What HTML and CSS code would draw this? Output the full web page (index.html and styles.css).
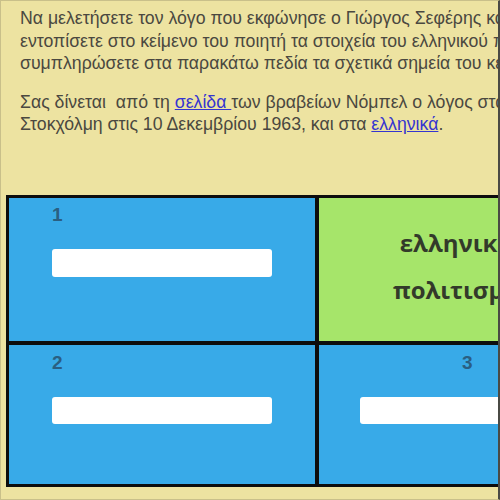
FILE: index.html
```html
<!DOCTYPE html>
<html lang="el">
<head>
<meta charset="utf-8">
<title>Σεφέρης</title>
<link rel="stylesheet" href="styles.css">
</head>
<body>
<div class="frame">
  <div class="intro">
    <p class="para para-first">Να μελετήσετε τον λόγο που εκφώνησε ο Γιώργος Σεφέρης κατά την τελετή απονομής του βραβείου Νόμπελ, να<br>εντοπίσετε στο κείμενο του ποιητή τα στοιχεία του ελληνικού πολιτισμού που αναφέρει και να<br>συμπληρώσετε στα παρακάτω πεδία τα σχετικά σημεία του κειμένου.</p>
    <p class="para">Σας δίνεται &nbsp;από τη <a href="#">σελίδα </a>των βραβείων Νόμπελ ο λόγος στα αγγλικά, όπως εκφωνήθηκε στη<br>Στοκχόλμη στις 10 Δεκεμβρίου 1963, και στα <a href="#">ελληνικά</a>.</p>
  </div>
  <div class="board">
    <div class="cell cell-blue row-a">
      <div class="num">1</div>
      <div class="field"></div>
    </div>
    <div class="cell cell-green row-a">
      <div class="title">ελληνικός<br>πολιτισμός</div>
    </div>
    <div class="cell cell-blue row-b">
      <div class="num">2</div>
      <div class="field"></div>
    </div>
    <div class="cell cell-blue row-b">
      <div class="num num-right">3</div>
      <div class="field field-right"></div>
    </div>
  </div>
</div>
</body>
</html>
```
FILE: styles.css
```css
html, body {
  margin: 0;
  padding: 0;
}
body {
  background: #ede3a1;
  overflow: hidden;
  font-family: "Liberation Sans", Arial, sans-serif;
}
.frame {
  width: 500px;
  height: 500px;
  box-sizing: border-box;
  border: 1px solid #c9c08a;
  border-right: 2px solid #4a4a44;
  overflow: hidden;
}
.intro {
  padding-left: 19px;
  padding-top: 6px;
  width: 1200px;
}
.para {
  margin: 0 0 16px 0;
  font-size: 17.7px;
  line-height: 22.5px;
  color: #4a4840;
  white-space: nowrap;
}
.para a {
  color: #3535d0;
  text-decoration: underline;
}
.board {
  margin-top: 59px;
  margin-left: 5px;
  display: grid;
  grid-template-columns: 306px 306px;
  grid-template-rows: 143px 139px;
  gap: 4px;
  padding: 3px;
  background: #0d0d0d;
  width: max-content;
}
.cell {
  box-sizing: border-box;
}
.cell-blue {
  background: #38aae8;
}
.cell-green {
  background: #a6e56a;
}
.num {
  margin-left: 43px;
  font-size: 19px;
  font-weight: 700;
  line-height: 22px;
  color: #2a5f82;
  padding-top: 6px;
}
.num-right {
  margin-left: 143px;
}
.field {
  margin-left: 43px;
  margin-top: 23px;
  width: 220px;
  height: 28px;
  background: #ffffff;
  border-radius: 3px;
}
.row-b .field {
  margin-top: 23px;
  height: 27px;
}
.row-b .num {
  padding-top: 7px;
}
.field-right {
  margin-left: 41px;
}
.title {
  padding-top: 21px;
  padding-right: 20px;
  text-align: center;
  font-family: "Open Sans", "DejaVu Sans", sans-serif;
  font-weight: 700;
  font-size: 24px;
  line-height: 47px;
  color: #333a2a;
}
```
